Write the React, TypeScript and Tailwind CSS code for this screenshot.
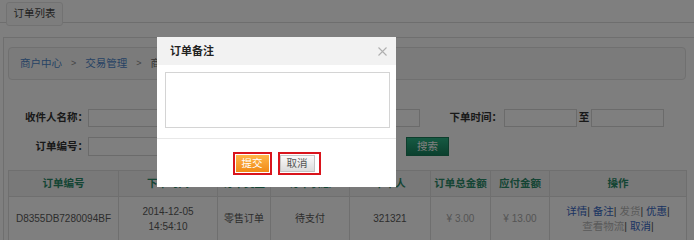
import React from "react";

const F = "font-['Liberation_Sans','Noto_Sans_CJK_SC',sans-serif]";

function Input({ w, h = 18 }: { w: number; h?: number }) {
  return (
    <div
      className="border border-[#d6d6d6] bg-white shrink-0"
      style={{ width: w, height: h }}
    />
  );
}

export default function App() {
  const cols = [110, 99, 53, 79, 81, 60, 59, 137];
  const heads = ["订单编号", "下单时间", "订单类型", "订单状态", "下单人", "订单总金额", "应付金额", "操作"];
  return (
    <div className={`relative w-[694px] h-[240px] overflow-hidden bg-white text-[10px] text-[#333] ${F}`}>
      {/* tab bar */}
      <div className="h-[23px] border-b border-[#dcdcdc] flex pl-[6px]">
        <div className="relative mt-[2px] h-[24px] w-[57px] rounded-[3px] border border-[#e4e4e4] bg-[#fbfbfb] flex items-center justify-center text-[10.5px] text-[#444]">
          订单列表
        </div>
      </div>

      {/* panel */}
      <div className="ml-[3px] mt-[14px] w-[694px] h-[300px] border border-[#dedede] bg-[#fcfcfc] pl-[4px] pt-[9px]">
        <div className="w-[678px] h-[33px] rounded-[4px] border border-[#e0e0e0] bg-[#f6f6f6] flex items-center pl-[11px] gap-[9px] text-[10.5px]">
          <span className="text-[#4d86c9]">商户中心</span>
          <span className="text-[#888] text-[9px]">&gt;</span>
          <span className="text-[#4d86c9]">交易管理</span>
          <span className="text-[#888] text-[9px]">&gt;</span>
          <span className="text-[#666]">商品订单</span>
        </div>

        {/* filters */}
        <div className="mt-[29px] flex items-center">
          <div className="w-[80px] text-right font-bold text-[#333] text-[10.5px]">收件人名称：</div>
          <Input w={130} />
          <div className="w-[84px] text-right font-bold text-[#333] text-[10.5px]">订单状态：</div>
          <Input w={118} />
          <div className="w-[84px] text-right font-bold text-[#333] text-[10.5px] pr-[2px]">下单时间：</div>
          <Input w={73} />
          <div className="w-[14px] text-center font-bold text-[#333] text-[10.5px]">至</div>
          <Input w={73} />
        </div>
        <div className="mt-[10px] flex items-center">
          <div className="w-[80px] text-right font-bold text-[#333] text-[10.5px]">订单编号：</div>
          <Input w={130} h={19} />
          <div className="ml-[188px] h-[19px] w-[43px] border border-[#1a7a58] bg-gradient-to-b from-[#2cb486] to-[#17805c] flex items-center justify-center text-white text-[10.5px]">
            搜索
          </div>
        </div>

        {/* table */}
        <table className="mt-[14px] border-collapse table-fixed w-[679px] text-[10px]">
          <colgroup>
            {cols.map((c, i) => (
              <col key={i} style={{ width: c }} />
            ))}
          </colgroup>
          <thead>
            <tr className="h-[26px] bg-[#f2f2f2]">
              {heads.map((h) => (
                <th key={h} className="border border-[#dedede] font-bold text-[#2a8a69] text-[10.5px] text-center">
                  {h}
                </th>
              ))}
            </tr>
          </thead>
          <tbody>
            <tr className="h-[44px] bg-white text-[#5a5a5a] text-center">
              <td className="border border-[#dedede]">D8355DB7280094BF</td>
              <td className="border border-[#dedede] leading-[15px]">
                2014-12-05
                <br />
                14:54:10
              </td>
              <td className="border border-[#dedede]">零售订单</td>
              <td className="border border-[#dedede]">待支付</td>
              <td className="border border-[#dedede]">321321</td>
              <td className="border border-[#dedede] text-[#aaa]">¥ 3.00</td>
              <td className="border border-[#dedede] text-[#aaa]">¥ 13.00</td>
              <td className="border border-[#dedede] leading-[15px] text-[10.5px]">
                <span className="text-[#3566c4]">详情</span>
                <span className="text-[#555]">| </span>
                <span className="text-[#3566c4]">备注</span>
                <span className="text-[#555]">| </span>
                <span className="text-[#b5b5b5]">发货</span>
                <span className="text-[#555]">| </span>
                <span className="text-[#3566c4]">优惠</span>
                <span className="text-[#555]">|</span>
                <br />
                <span className="text-[#b5b5b5]">查看物流</span>
                <span className="text-[#555]">| </span>
                <span className="text-[#3566c4]">取消</span>
                <span className="text-[#555]">|</span>
              </td>
            </tr>
          </tbody>
        </table>
      </div>

      {/* overlay */}
      <div className="absolute inset-0 z-20 bg-black/50" />

      {/* modal */}
      <div className="absolute z-30 left-[157px] top-[37px] w-[239px] h-[150px] bg-white flex flex-col">
        <div className="h-[28px] bg-[#f2f2f2] flex items-center justify-between pl-[13px] pr-[9px]">
          <span className="text-[11px] font-bold text-[#222]">订单备注</span>
          <svg width="9" height="9" viewBox="0 0 9 9" className="shrink-0">
            <path d="M0.5 0.5 L8.5 8.5 M8.5 0.5 L0.5 8.5" stroke="#b0b0b0" strokeWidth="1.1" fill="none" />
          </svg>
        </div>
        <div className="pl-[8px] pr-[6px] pt-[7px] pb-[10px] border-b border-[#e8e8e8]">
          <div className="h-[56px] border border-[#d4d4d4] bg-white" />
        </div>
        <div className="flex justify-center gap-[6px] pt-[13px]">
          <div className="border-2 border-[#d9141c] p-[1px] w-[39px] h-[23px]">
            <div className="h-full w-full bg-gradient-to-b from-[#ffb545] to-[#f08a12] flex items-center justify-center text-white text-[10.5px]">
              提交
            </div>
          </div>
          <div className="border-2 border-[#d9141c] pt-[1px] pb-[1px] w-[43px] h-[23px]">
            <div className="h-full w-[35px] border border-[#c4c4c4] bg-gradient-to-b from-[#fafafa] to-[#dcdcdc] flex items-center justify-center text-[#555] text-[10.5px]">
              取消
            </div>
          </div>
        </div>
      </div>
    </div>
  );
}
